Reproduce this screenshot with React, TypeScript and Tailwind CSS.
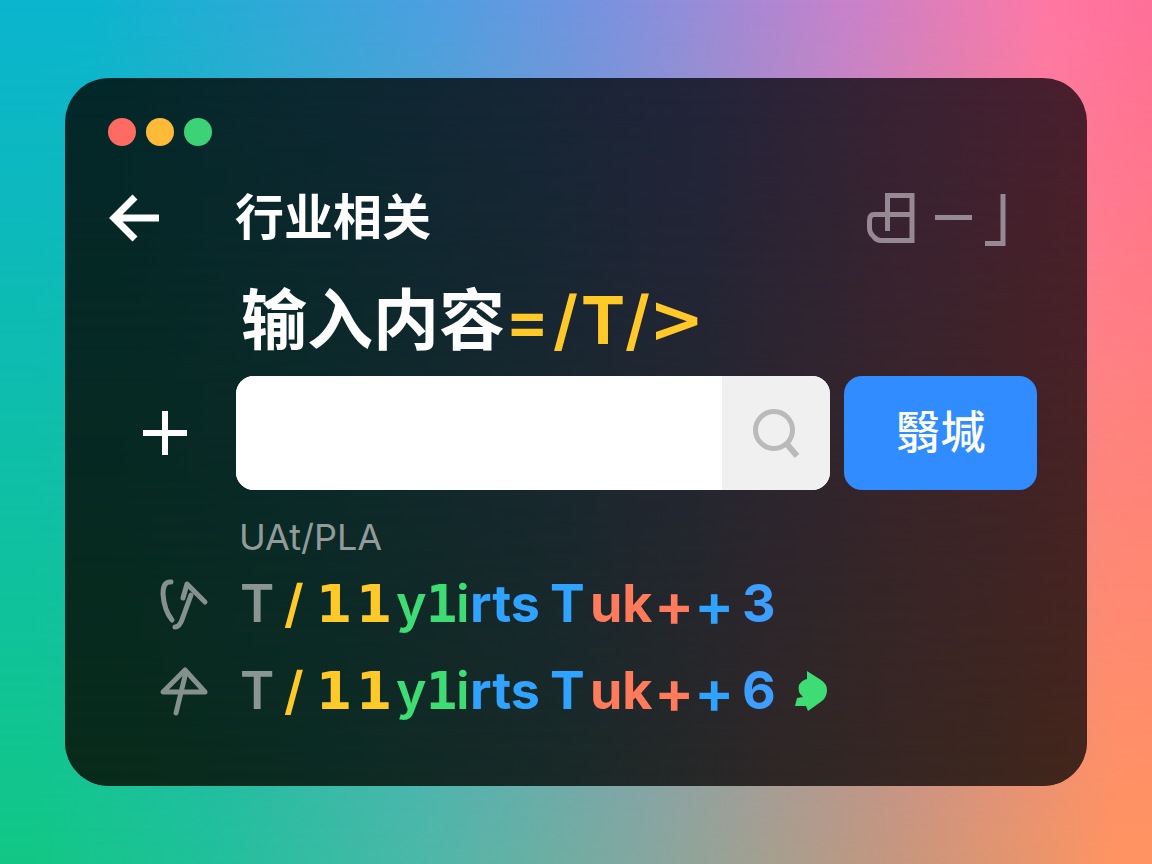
import React from 'react';

interface Token {
    text: string;
    className: string;
}

interface ResultRowProps {
    icon: React.ReactNode;
    count: string;
    trailing?: React.ReactNode;
}

const TOKENS: Token[] = [
    { text: 'T', className: 'w-11 font-semibold text-[#8b9692]' },
    { text: '/', className: 'w-8 font-semibold text-[#ffc928]' },
    { text: '1', className: "w-10 font-['DejaVu_Sans'] font-bold text-[#ffc928]" },
    { text: '1', className: "w-10 font-['DejaVu_Sans'] font-bold text-[#ffc928]" },
    { text: 'y', className: 'w-[30px] font-semibold text-[#3ddc74]' },
    { text: '1', className: "w-[30px] font-['DejaVu_Sans_Mono'] font-bold text-[#3ddc74]" },
    { text: 'i', className: 'w-[14px] font-semibold text-[#3ddc74]' },
    { text: 'rts', className: 'w-20 font-bold text-[#30a2ff]' },
    { text: 'T', className: 'w-10 font-bold text-[#30a2ff]' },
    { text: 'uk', className: 'w-16 font-bold text-[#ff7b5c]' },
    { text: '+', className: 'w-10 text-[60px] font-semibold text-[#ff7b5c]' },
    { text: '+', className: 'w-10 text-[60px] font-semibold text-[#30a2ff]' },
];

const BackArrow = () => (
    <svg width="52" height="48" viewBox="0 0 52 48" fill="none" stroke="currentColor" strokeWidth="7">
        <path d="M27 3 L6 24 L27 45 M6 24 H51" />
    </svg>
);

const PlusIcon = () => (
    <svg width="44" height="44" viewBox="0 0 44 44" fill="none" stroke="currentColor" strokeWidth="6">
        <path d="M22 0 V44 M0 22 H44" />
    </svg>
);

const WindowControls = () => (
    <svg width="140" height="56" viewBox="0 0 140 56" fill="none" stroke="#978993" strokeWidth="5">
        <path d="M20.5 41 V5.5 H45 V50.5 H14 Q10 50.5 7 47 Q2.5 43 2.5 38 V31 Q2.5 24.5 7 24.5 H45" />
        <path d="M68 27.5 H105" />
        <path d="M118 53.5 H136 V4" />
    </svg>
);

const SearchIcon = () => (
    <svg width="48" height="50" viewBox="0 0 48 50" fill="none" stroke="#bababa" strokeWidth="5">
        <circle cx="22" cy="22" r="18.5" />
        <path d="M34 35 L45 48" strokeWidth="6" />
    </svg>
);

const CurvedArrow = () => (
    <svg width="50" height="52" viewBox="0 0 50 52" fill="none" stroke="#85918d" strokeWidth="5" strokeLinecap="round" strokeLinejoin="round">
        <path d="M12 4 Q4 3 4 16 Q5 32 13 42" />
        <path d="M16 49 Q21 49 24 39 L32 17" />
        <path d="M24 20 L28 6 L46 24" />
    </svg>
);

const TentArrow = () => (
    <svg width="50" height="50" viewBox="0 0 50 50" fill="none" stroke="#85918d" strokeWidth="5" strokeLinecap="round" strokeLinejoin="round">
        <path d="M26 4 L4 26 H46 Z" />
        <path d="M27 6 L17 47" />
    </svg>
);

const Leaf = () => (
    <svg width="34" height="42" viewBox="0 0 34 42" fill="#3ddc74">
        <path d="M13 1 L27 10 Q33 14 33 20 Q33 27 28 31 L14 41 L12 36 L1 36 L3 28 L9 27 Q3 22 5 15 Q8 10 13 9 Z" />
    </svg>
);

const ResultRow: React.FC<ResultRowProps> = ({ icon, count, trailing }) => (
    <li className="grid h-[87px] grid-cols-[128px_1fr] items-center">
        <div className="flex justify-center pl-6">{icon}</div>
        <div className="flex items-center pl-1 text-[52px] leading-none whitespace-nowrap">
            {TOKENS.map((token, i) => (
                <span key={i} className={token.className}>{token.text}</span>
            ))}
            <span className="ml-2 w-10 font-bold text-[#3c9eff]">{count}</span>
            {trailing && <span className="ml-3">{trailing}</span>}
        </div>
    </li>
);

export default function App() {
    return (
        <div className="relative isolate min-h-screen bg-[linear-gradient(to_right,#0cb5cf_8%,#4f9fe0_38%,#7b92e0_53%,#c682cc_73%,#ff78a5_91%,#ff6f98)] px-[65px] py-[78px] font-['Inter','Noto_Sans_CJK_SC',sans-serif]">
            {/* Lower half of the four-corner backdrop */}
            <div className="absolute inset-0 -z-10 bg-[linear-gradient(to_right,#12c785_3%,#20c09a_18%,#4ab8a8_36%,#85a79f_56%,#c3977f_77%,#ff9460_97%)] [mask-image:linear-gradient(to_bottom,transparent,black)]" />

            <main className="relative isolate min-h-[calc(100vh-156px)] overflow-hidden rounded-[44px] bg-[linear-gradient(to_right,#04282a_5%,#102733_35%,#22243a_62%,#3a2234_82%,#4b1e2d)] pt-10 pr-[50px] pb-8 pl-[43px]">
                <div className="absolute inset-0 -z-10 bg-[linear-gradient(to_right,#082b1b_5%,#0b2b22_25%,#1a2928_50%,#2d2727_68%,#43261b)] [mask-image:linear-gradient(to_bottom,transparent,black)]" />

                <div className="flex gap-[10px]">
                    <span className="size-7 rounded-full bg-[#ff6b62]" />
                    <span className="size-7 rounded-full bg-[#ffbb38]" />
                    <span className="size-7 rounded-full bg-[#3bd376]" />
                </div>

                <header className="mt-9 grid grid-cols-[127px_1fr_auto] items-center text-white">
                    <button aria-label="返回" className="w-fit">
                        <BackArrow />
                    </button>
                    <h1 className="text-[49px] leading-[72px] font-bold">行业相关</h1>
                    <div className="pr-[30px]">
                        <WindowControls />
                    </div>
                </header>

                <label htmlFor="content" className="mt-4 ml-[133px] flex items-center text-[66px] leading-[100px] font-bold whitespace-nowrap text-white">
                    输入内容
                    <span className="flex font-semibold text-[#ffc928]">
                        <span className="w-12">=</span>
                        <span className="w-7">/</span>
                        <span className="w-11 font-bold">T</span>
                        <span className="w-6">/</span>
                        <span className="font-['DejaVu_Sans'] font-bold">&gt;</span>
                    </span>
                </label>

                <form className="mt-[6px] grid grid-cols-[128px_1fr_auto] items-center" onSubmit={(e) => e.preventDefault()}>
                    <button type="button" aria-label="添加" className="ml-[35px] w-fit text-white">
                        <PlusIcon />
                    </button>
                    <div className="flex h-[114px] overflow-hidden rounded-[18px] bg-white">
                        <input id="content" type="text" className="min-w-0 flex-1 bg-white px-6 text-4xl text-gray-900 outline-none" />
                        <button type="button" aria-label="搜索" className="flex w-[108px] items-center justify-center bg-[#f0f0f0]">
                            <SearchIcon />
                        </button>
                    </div>
                    <button type="submit" className="ml-[14px] h-[114px] w-[193px] rounded-[18px] bg-[#318cff] text-[45px] font-medium text-white">
                        翳堿
                    </button>
                </form>

                <p className="mt-6 ml-[131px] text-[36px] leading-[46px] text-[#929b9b]">UAt/PLA</p>

                <ul>
                    <ResultRow icon={<CurvedArrow />} count="3" />
                    <ResultRow icon={<TentArrow />} count="6" trailing={<Leaf />} />
                </ul>
            </main>
        </div>
    );
}
